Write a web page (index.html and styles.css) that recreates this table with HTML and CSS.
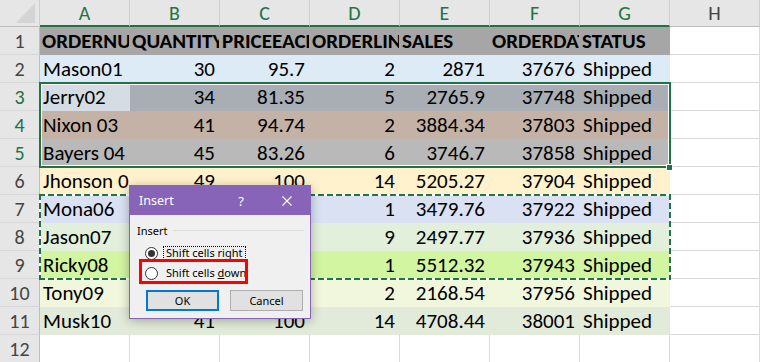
FILE: index.html
```html
<!DOCTYPE html>
<html>
<head>
<meta charset="utf-8">
<title>Insert</title>
<link rel="stylesheet" href="styles.css">
</head>
<body>
<div class="sheet">
  <div class="grid">
    <div class="corner"><svg class="tri" width="20" height="21" viewBox="0 0 20 21"><polygon points="19,0 19,20 0,20" fill="#d4d4d4"/></svg></div>
    <div class="ch sel">A</div><div class="ch sel">B</div><div class="ch sel">C</div><div class="ch sel">D</div><div class="ch sel">E</div><div class="ch sel">F</div><div class="ch sel">G</div><div class="ch">H</div>

    <div class="row r1"><div class="rh">1</div><div class="c b">ORDERNUMBER</div><div class="c b">QUANTITYORDERED</div><div class="c b">PRICEEACH</div><div class="c b">ORDERLINENUMBER</div><div class="c b">SALES</div><div class="c b">ORDERDATE</div><div class="c b">STATUS</div><div class="c e"></div></div>
    <div class="row r2"><div class="rh">2</div><div class="c">Mason01</div><div class="c n">30</div><div class="c n">95.7</div><div class="c n">2</div><div class="c n">2871</div><div class="c n">37676</div><div class="c">Shipped</div><div class="c e"></div></div>
    <div class="row r3"><div class="rh sel">3</div><div class="c act">Jerry02</div><div class="c n">34</div><div class="c n">81.35</div><div class="c n">5</div><div class="c n">2765.9</div><div class="c n">37748</div><div class="c">Shipped</div><div class="c e"></div></div>
    <div class="row r4"><div class="rh sel">4</div><div class="c">Nixon 03</div><div class="c n">41</div><div class="c n">94.74</div><div class="c n">2</div><div class="c n">3884.34</div><div class="c n">37803</div><div class="c">Shipped</div><div class="c e"></div></div>
    <div class="row r5"><div class="rh sel">5</div><div class="c">Bayers 04</div><div class="c n">45</div><div class="c n">83.26</div><div class="c n">6</div><div class="c n">3746.7</div><div class="c n">37858</div><div class="c">Shipped</div><div class="c e"></div></div>
    <div class="row r6"><div class="rh">6</div><div class="c">Jhonson 05</div><div class="c n">49</div><div class="c n">100</div><div class="c n">14</div><div class="c n">5205.27</div><div class="c n">37904</div><div class="c">Shipped</div><div class="c e"></div></div>
    <div class="row r7"><div class="rh">7</div><div class="c">Mona06</div><div class="c n">36</div><div class="c n">96.66</div><div class="c n">1</div><div class="c n">3479.76</div><div class="c n">37922</div><div class="c">Shipped</div><div class="c e"></div></div>
    <div class="row r8"><div class="rh">8</div><div class="c">Jason07</div><div class="c n">29</div><div class="c n">86.13</div><div class="c n">9</div><div class="c n">2497.77</div><div class="c n">37936</div><div class="c">Shipped</div><div class="c e"></div></div>
    <div class="row r9"><div class="rh">9</div><div class="c">Ricky08</div><div class="c n">48</div><div class="c n">100</div><div class="c n">1</div><div class="c n">5512.32</div><div class="c n">37943</div><div class="c">Shipped</div><div class="c e"></div></div>
    <div class="row r10"><div class="rh">10</div><div class="c">Tony09</div><div class="c n">22</div><div class="c n">98.57</div><div class="c n">2</div><div class="c n">2168.54</div><div class="c n">37956</div><div class="c">Shipped</div><div class="c e"></div></div>
    <div class="row r11"><div class="rh">11</div><div class="c">Musk10</div><div class="c n">41</div><div class="c n">100</div><div class="c n">14</div><div class="c n">4708.44</div><div class="c n">38001</div><div class="c">Shipped</div><div class="c e"></div></div>
    <div class="row r12"><div class="rh">12</div><div class="c e"></div><div class="c e"></div><div class="c e"></div><div class="c e"></div><div class="c e"></div><div class="c e"></div><div class="c e"></div><div class="c e"></div></div>
  </div>

  <div class="selbox"></div>
  <div class="handle"></div>
  <div class="ants"></div>

  <div class="dialog">
    <div class="dtitle">
      <span class="dname">Insert</span>
      <span class="tbtn">?</span>
      <span class="tbtn"><svg width="10" height="10" viewBox="0 0 10 10"><path d="M0.5 0.5 L9.5 9.5 M9.5 0.5 L0.5 9.5" stroke="#fff" stroke-width="1.1" fill="none"/></svg></span>
    </div>
    <div class="dbody">
      <div class="group"><span>Insert</span><span class="gline"></span></div>
      <div class="opt"><span class="radio on"></span><span class="olabel focus">Shift cells right</span></div>
      <div class="opt"><span class="radio"></span><span class="olabel">Shift cells <u>d</u>own</span></div>
      <div class="btns"><span class="btn ok">OK</span><span class="btn">Cancel</span></div>
    </div>
    <div class="mark"></div>
  </div>
</div>
</body>
</html>
```

FILE: styles.css
```css
html, body {
  margin: 0;
  padding: 0;
  background: #ffffff;
}

.sheet {
  position: relative;
  width: 760px;
  height: 362px;
  overflow: hidden;
  font-family: Carlito, Lato, "Liberation Sans", sans-serif;
}

.grid {
  display: grid;
  grid-template-columns: 40px repeat(8, 90px);
  grid-template-rows: 27px repeat(12, 28px);
}

.row { display: contents; }

.corner, .ch, .rh {
  background: #e6e6e6;
  box-sizing: border-box;
  color: #444444;
  font-size: 20px;
}

.corner {
  border-right: 1px solid #cfcfcf;
  border-bottom: 1px solid #bdbdbd;
  display: flex;
  justify-content: flex-end;
  align-items: flex-end;
  padding: 0 3px 2px 0;
}

.tri { display: block; }

.ch {
  border-right: 1px solid #d0d0d0;
  border-bottom: 1px solid #bdbdbd;
  text-align: center;
  line-height: 27px;
}

.ch.sel {
  color: #217346;
  border-bottom: 2px solid #217346;
  line-height: 26px;
}

.rh {
  border-right: 1px solid #bdbdbd;
  border-bottom: 1px solid #d6d6d6;
  text-align: center;
  line-height: 28px;
  overflow: hidden;
}

.rh.sel { color: #217346; }

.c {
  box-sizing: border-box;
  border-right: 1px solid #dadada;
  border-bottom: 1px solid #dadada;
  font-size: 21px;
  line-height: 28px;
  padding: 0 3px;
  white-space: nowrap;
  overflow: hidden;
  color: #000000;
}

.c.n { text-align: right; padding-right: 4px; }
.c.b { font-weight: bold; padding-left: 2px; }

.row:not(.r12) > .c:not(.e) { border-color: transparent; }

.r1 > .c:not(.e) { background: #a6a6a6; }
.r2 > .c:not(.e) { background: #ddebf7; }
.r3 > .c:not(.e) { background: #a9adb4; }
.r3 > .c.act { background: #d6dce4; }
.r4 > .c:not(.e) { background: #c5b2a6; }
.r5 > .c:not(.e) { background: #b9b9b9; }
.r6 > .c:not(.e) { background: #fff2cc; }
.r7 > .c:not(.e) { background: #d9e1f2; }
.r8 > .c:not(.e) { background: #e2efda; }
.r9 > .c:not(.e) { background: #d2f5a2; }
.r10 > .c:not(.e) { background: #f1f7dc; }
.r11 > .c:not(.e) { background: #e2ebda; }

/* selection of A3:G5 */
.selbox {
  position: absolute;
  left: 39px;
  top: 82px;
  width: 632px;
  height: 86px;
  box-sizing: border-box;
  border: 2px solid #217346;
  box-shadow: inset 0 0 0 1px #ffffff;
}

.handle {
  position: absolute;
  left: 666px;
  top: 164px;
  width: 5px;
  height: 5px;
  background: #217346;
  border: 1px solid #ffffff;
}

/* copy marquee A7:G9 */
.ants {
  position: absolute;
  left: 39px;
  top: 194px;
  width: 632px;
  height: 86px;
  background:
    repeating-linear-gradient(90deg, #217346 0 6px, #ffffff 6px 9px) left top / 100% 2px no-repeat,
    repeating-linear-gradient(90deg, #217346 0 6px, #ffffff 6px 9px) left bottom / 100% 2px no-repeat,
    repeating-linear-gradient(180deg, #217346 0 6px, #ffffff 6px 9px) left top / 2px 100% no-repeat,
    repeating-linear-gradient(180deg, #217346 0 6px, #ffffff 6px 9px) right top / 2px 100% no-repeat;
}

/* dialog */
.dialog {
  position: absolute;
  left: 129px;
  top: 185px;
  width: 182px;
  height: 134px;
  box-sizing: border-box;
  border: 1px solid #8764b8;
  background: #f0f0f0;
  box-shadow: 0 2px 10px rgba(0, 0, 0, 0.28);
  font-family: "Noto Sans", "Open Sans", sans-serif;
  font-size: 11px;
  color: #000000;
  display: flex;
  flex-direction: column;
}

.dtitle {
  height: 29px;
  background: #8764b8;
  color: #ffffff;
  display: flex;
  align-items: center;
  font-size: 12.5px;
}

.dname { flex: 1; padding-left: 9px; }

.tbtn {
  width: 46px;
  height: 29px;
  display: flex;
  align-items: center;
  justify-content: center;
  font-size: 13px;
}

.dbody {
  padding: 7px 6px 0 7px;
  display: flex;
  flex-direction: column;
}

.group {
  display: flex;
  align-items: center;
  height: 16px;
}

.gline {
  flex: 1;
  height: 1px;
  background: #dcdcdc;
  margin-left: 5px;
}

.opt {
  display: flex;
  align-items: center;
  height: 20px;
  padding-left: 8px;
}

.group + .opt { margin-top: 5px; }

.radio {
  width: 13px;
  height: 13px;
  box-sizing: border-box;
  border: 1px solid #333333;
  border-radius: 50%;
  background: #ffffff;
  display: flex;
  align-items: center;
  justify-content: center;
  margin-right: 5px;
}

.radio.on::after {
  content: "";
  width: 7px;
  height: 7px;
  border-radius: 50%;
  background: #333333;
}

.olabel {
  padding: 0 2px;
  line-height: 12px;
  border: 1px dotted transparent;
}

.olabel.focus { border-color: #000000; }

.btns {
  display: flex;
  gap: 11px;
  margin-top: 7px;
  padding-left: 9px;
}

.btn {
  width: 73px;
  height: 21px;
  box-sizing: border-box;
  background: #e1e1e1;
  border: 1px solid #adadad;
  display: flex;
  align-items: center;
  justify-content: center;
}

.btn.ok { border: 2px solid #0078d7; }

.mark {
  position: absolute;
  left: 9px;
  top: 73px;
  width: 109px;
  height: 25px;
  box-sizing: border-box;
  border: 3px solid #ff0000;
}
```
